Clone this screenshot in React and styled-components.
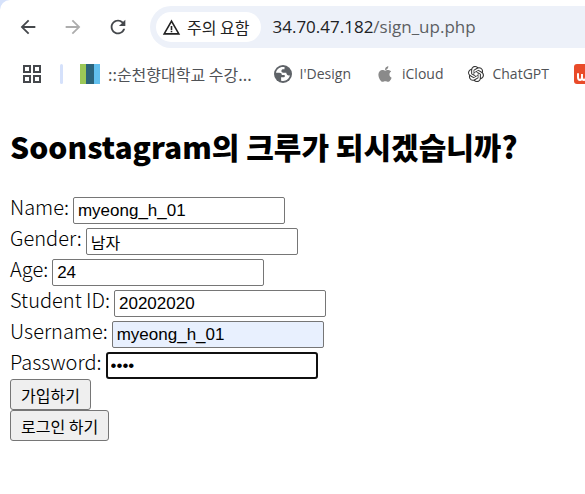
import React, { useId } from "react";
import styled, { createGlobalStyle } from "styled-components";
import { MdArrowBack, MdArrowForward, MdRefresh, MdWarningAmber } from "react-icons/md";
import { SiOpenai } from "react-icons/si";
import { FaApple } from "react-icons/fa";

const korean = '"Noto Sans CJK KR", sans-serif';

const GlobalStyle = createGlobalStyle`
  * { box-sizing: border-box; }
  body {
    margin: 0;
    background: #fff;
    color: #000;
    font-family: ${korean};
    overflow-x: hidden;
  }
`;

const Window = styled.div`
  overflow: hidden;
  background: #d6e2fb;
`;

const Chrome = styled.header`
  background: #fff;
  border-top-left-radius: 10px;
`;

const Toolbar = styled.div`
  display: flex;
  align-items: center;
  padding: 6px 0 6px 17px;
`;

const NavButton = styled.button`
  display: flex;
  align-items: center;
  justify-content: center;
  flex: none;
  width: 21px;
  height: 32px;
  margin-right: 24px;
  padding: 0;
  border: 0;
  background: none;
  color: #45484c;
  font-size: 22px;

  &:disabled { color: #adadad; }
  svg { flex: none; }
`;

const AddressBar = styled.div`
  display: flex;
  align-items: center;
  flex: 1;
  min-width: 0;
  height: 42px;
  margin-left: -2px;
  padding: 6px;
  border-radius: 21px 0 0 21px;
  background: #edf1f9;
`;

const SecurityChip = styled.button`
  display: flex;
  align-items: center;
  flex: none;
  gap: 6px;
  height: 30px;
  padding: 0 12px 0 6px;
  border: 0;
  border-radius: 15px;
  background: #fff;
  color: #222;
  font: 400 16px/28px ${korean};

  svg { font-size: 19px; }
`;

const Address = styled.span`
  margin-left: 11px;
  color: #5c5f63;
  font: 400 17px/30px "Open Sans", sans-serif;
  white-space: nowrap;
`;

const Host = styled.span`
  color: #202124;
`;

const Bookmarks = styled.nav`
  display: flex;
  align-items: center;
  height: 40px;
  padding-left: 23px;
  white-space: nowrap;
`;

const AppsButton = styled.button`
  display: flex;
  flex: none;
  padding: 0;
  border: 0;
  background: none;
`;

const Divider = styled.span`
  flex: none;
  width: 3px;
  height: 20px;
  margin: 0 17px 0 19px;
  border-radius: 2px;
  background: #d5e1fb;
`;

const Bookmark = styled.a`
  display: flex;
  align-items: center;
  flex: none;
  gap: 8px;
  margin-right: ${(p) => (p.$korean ? 22 : 25)}px;
  color: #505256;
  font: ${(p) => (p.$korean ? `400 16px/24px ${korean}` : '400 14px/24px "Open Sans", sans-serif')};
  text-decoration: none;

  svg { flex: none; }
`;

const Page = styled.main`
  padding: 31px 10px 53px;
  background: #fff;
`;

const Title = styled.h2`
  margin: 0 0 26px;
  font-size: 30px;
  font-weight: 900;
  line-height: 42px;
`;

const Field = styled.div`
  display: flex;
  align-items: flex-end;
  gap: 4px;
  height: 31px;
`;

const Label = styled.label`
  font-size: 20px;
  font-weight: 300;
  line-height: 34px;
`;

const TextInput = styled.input`
  width: 212px;
  height: 27px;
  padding: 0 4px;
  border: 1px solid #767676;
  border-radius: 2px;
  outline: 0;
  background: ${(p) => (p.$autofilled ? "#e8f0fe" : "#fff")};
  color: #000;
  font: 400 17px "Liberation Sans", ${korean};

  &:lang(ko) {
    font: 400 16px ${korean};
  }

  &[type="password"] {
    padding: 0 3px;
    border: 2px solid #101010;
    border-radius: 3px;
  }
`;

const Actions = styled.div`
  display: flex;
  flex-direction: column;
  align-items: flex-start;
`;

const ActionButton = styled.button`
  height: 31px;
  padding: 0 10px;
  border: 1px solid #767676;
  border-radius: 3px;
  background: #efefef;
  color: #000;
  font: 400 16px/28px ${korean};
`;

const AppsIcon = () => (
  <svg width="18" height="18" viewBox="0 0 18 18" fill="none" stroke="#45484c" strokeWidth="2" aria-hidden="true">
    <path d="M1 1h6v6H1zM11 1h6v6h-6zM1 11h6v6H1zM11 11h6v6h-6z" />
  </svg>
);

const UniversityIcon = () => (
  <svg width="20" height="20" viewBox="0 0 20 20" aria-hidden="true">
    <path fill="#9bc757" d="M0 0h6v20H0z" />
    <path fill="#2b637b" d="M6 0h8v20H6z" />
    <path fill="#62c0ee" d="M14 0h6v20h-6z" />
  </svg>
);

const GlobeIcon = () => (
  <svg width="18" height="18" viewBox="0 0 18 18" aria-hidden="true">
    <circle cx="9" cy="9" r="9" fill="#5f6368" />
    <path fill="#fff" d="M10.5 2.1C6.1 1.2 2.6 4 2 7.7h3.2c1.9 0 2.6.8 2.6 2.2h2.1c.7 0 1 .5 1 1.1 0 .9-.6 1.3-1.5 1.3H7.1v3.4c4.3 1.2 8.1-1.5 8.8-5.4-1.1.5-2.1.3-2.8-.5-.6-.7-.8-1.4-.8-2.1H9.2c-1.1 0-1.8-.7-1.8-1.7 0-1.2.8-1.7 1.8-1.7h1.3z" />
  </svg>
);

const BrandIcon = () => (
  <svg width="20" height="20" viewBox="0 0 20 20" aria-hidden="true">
    <rect width="20" height="20" rx="3" fill="#e94b29" />
    <path d="M4 10v3c0 4 4 4 4 0v-3 3c0 4 4 4 4 0v-3" fill="none" stroke="#fff" strokeWidth="2" strokeLinecap="round" />
  </svg>
);

const fields = [
  { label: "Name:", value: "myeong_h_01" },
  { label: "Gender:", value: "남자", lang: "ko" },
  { label: "Age:", value: "24" },
  { label: "Student ID:", value: "20202020" },
  { label: "Username:", value: "myeong_h_01", autofilled: true },
  { label: "Password:", value: "1234", type: "password" },
];

function FormField({ label, value, type = "text", lang, autofilled }) {
  const id = useId();
  return (
    <Field>
      <Label htmlFor={id}>{label}</Label>
      <TextInput id={id} type={type} lang={lang} defaultValue={value} $autofilled={autofilled} />
    </Field>
  );
}

export default function App() {
  return (
    <Window>
      <GlobalStyle />
      <Chrome>
        <Toolbar>
          <NavButton aria-label="Back"><MdArrowBack /></NavButton>
          <NavButton aria-label="Forward" disabled><MdArrowForward /></NavButton>
          <NavButton aria-label="Reload"><MdRefresh /></NavButton>
          <AddressBar>
            <SecurityChip><MdWarningAmber />주의 요함</SecurityChip>
            <Address><Host>34.70.47.182</Host>/sign_up.php</Address>
          </AddressBar>
        </Toolbar>
        <Bookmarks>
          <AppsButton aria-label="Apps"><AppsIcon /></AppsButton>
          <Divider />
          <Bookmark href="#" $korean><UniversityIcon />::순천향대학교 수강...</Bookmark>
          <Bookmark href="#"><GlobeIcon />I'Design</Bookmark>
          <Bookmark href="#"><FaApple size={18} color="#8a8a8a" />iCloud</Bookmark>
          <Bookmark href="#"><SiOpenai size={16} color="#333" />ChatGPT</Bookmark>
          <Bookmark href="#" aria-label="Bookmark"><BrandIcon /></Bookmark>
        </Bookmarks>
      </Chrome>
      <Page>
        <Title>Soonstagram의 크루가 되시겠습니까?</Title>
        <form onSubmit={(e) => e.preventDefault()}>
          {fields.map((f) => <FormField key={f.label} {...f} />)}
          <Actions>
            <ActionButton type="submit">가입하기</ActionButton>
            <ActionButton type="button">로그인 하기</ActionButton>
          </Actions>
        </form>
      </Page>
    </Window>
  );
}
